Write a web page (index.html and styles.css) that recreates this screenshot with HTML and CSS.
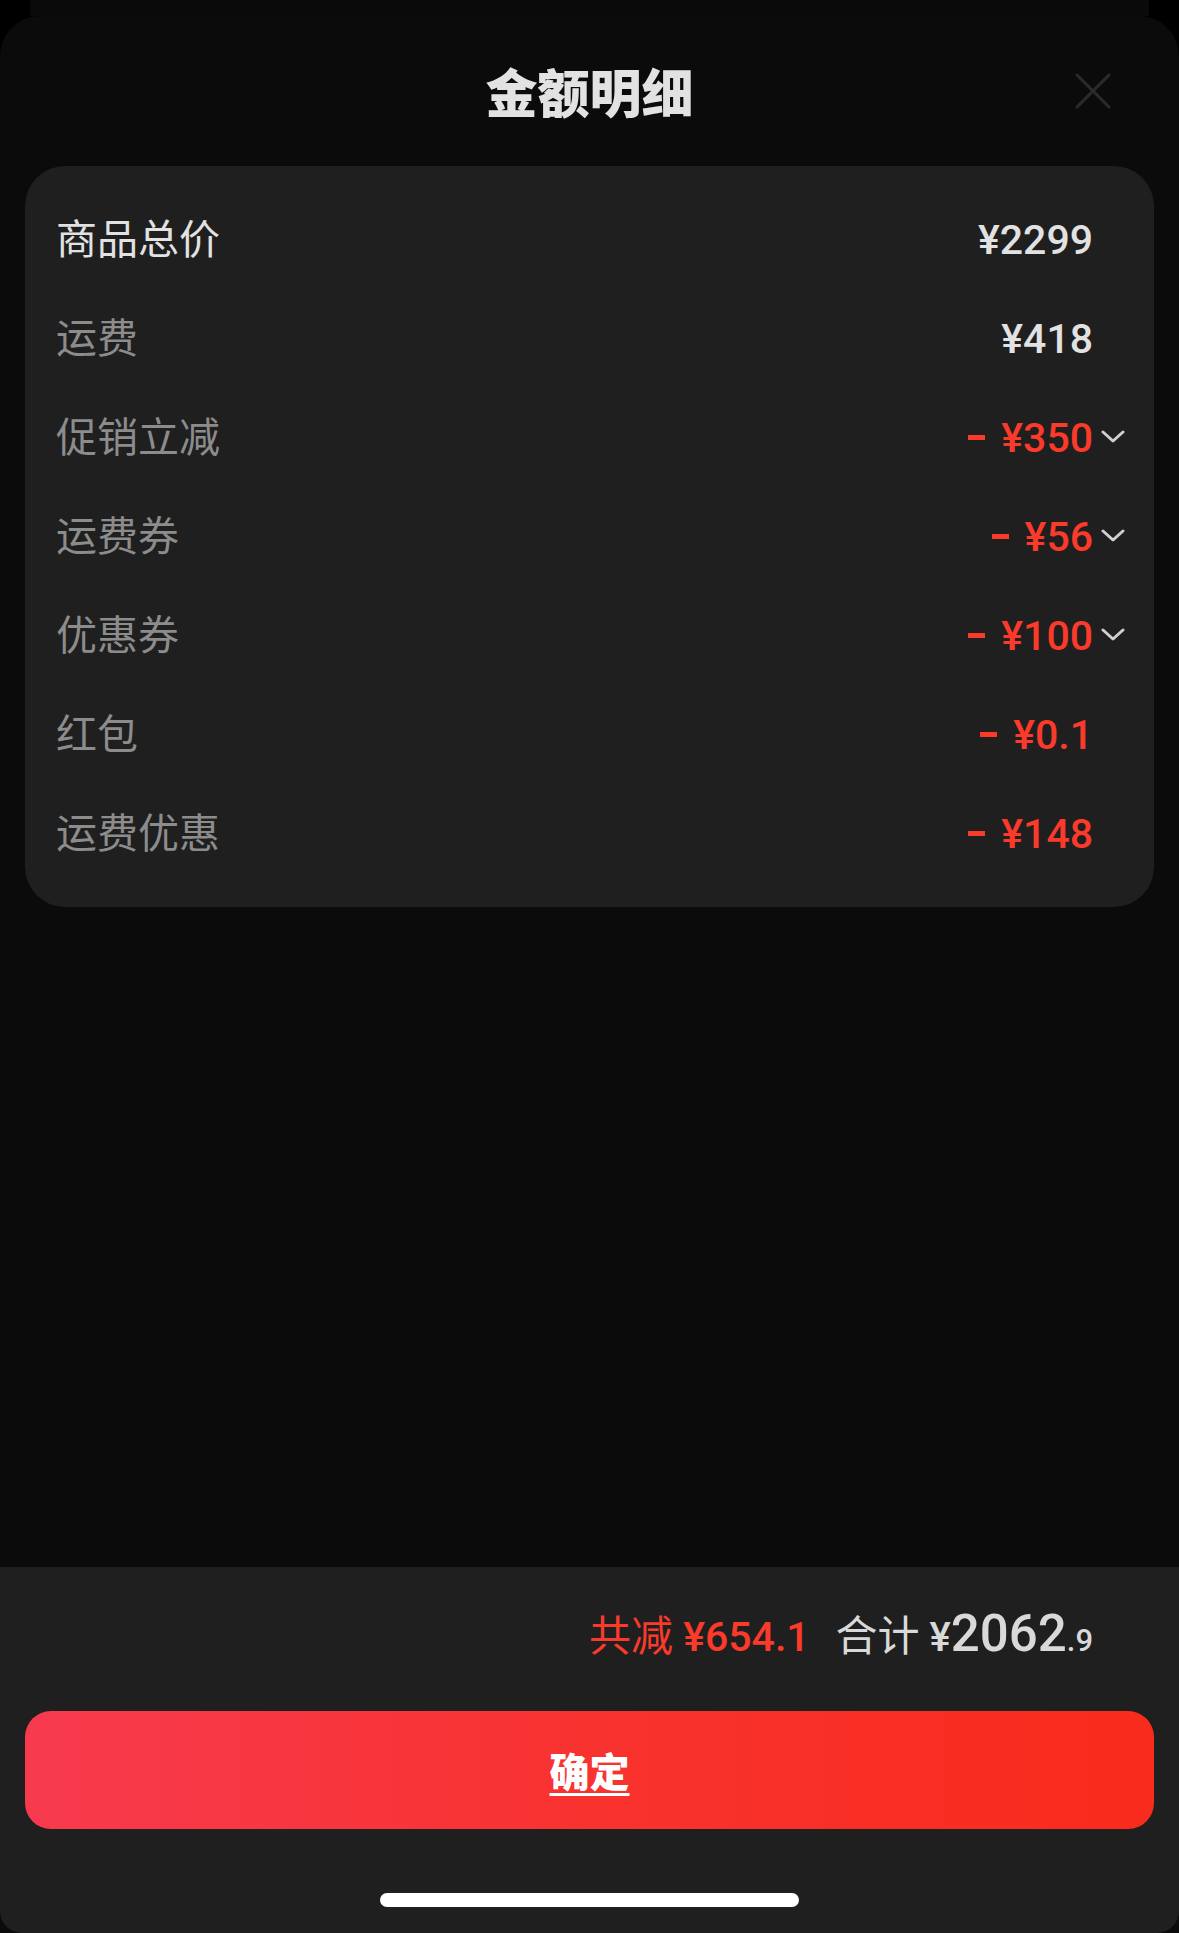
FILE: index.html
```html
<!DOCTYPE html>
<html lang="zh-CN">
<head>
  <meta charset="UTF-8">
  <title>金额明细</title>
  <meta name="viewport" content="width=device-width, initial-scale=1.0">
  <link rel="stylesheet" href="styles.css">
</head>
<body>
  <div class="behind"></div>
  <div class="sheet">
    <div class="sheet-head">
      <h1 class="title">金额明细</h1>
      <button class="close-btn" aria-label="关闭">
        <svg width="38" height="38" viewBox="0 0 38 38"><path d="M3 3L35 35M35 3L3 35" stroke="#2b2b2b" stroke-width="3" stroke-linecap="round" fill="none"/></svg>
      </button>
    </div>

    <div class="card">
      <div class="row main"><span class="label">商品总价</span><span class="val">¥2299</span><span class="slot"></span></div>
      <div class="row"><span class="label">运费</span><span class="val">¥418</span><span class="slot"></span></div>
      <div class="row"><span class="label">促销立减</span><span class="val minus"><span class="dash"></span>¥350</span><span class="slot"><svg class="chev" width="24" height="14" viewBox="0 0 24 14"><path d="M2 2L12 11L22 2" stroke="#d0d0d0" stroke-width="3" fill="none" stroke-linecap="round" stroke-linejoin="round"/></svg></span></div>
      <div class="row"><span class="label">运费券</span><span class="val minus"><span class="dash"></span>¥56</span><span class="slot"><svg class="chev" width="24" height="14" viewBox="0 0 24 14"><path d="M2 2L12 11L22 2" stroke="#d0d0d0" stroke-width="3" fill="none" stroke-linecap="round" stroke-linejoin="round"/></svg></span></div>
      <div class="row"><span class="label">优惠券</span><span class="val minus"><span class="dash"></span>¥100</span><span class="slot"><svg class="chev" width="24" height="14" viewBox="0 0 24 14"><path d="M2 2L12 11L22 2" stroke="#d0d0d0" stroke-width="3" fill="none" stroke-linecap="round" stroke-linejoin="round"/></svg></span></div>
      <div class="row"><span class="label">红包</span><span class="val minus"><span class="dash"></span>¥0.1</span><span class="slot"></span></div>
      <div class="row"><span class="label">运费优惠</span><span class="val minus"><span class="dash"></span>¥148</span><span class="slot"></span></div>
    </div>

    <div class="spacer"></div>

    <div class="footer">
      <div class="totals">
        <span class="saved"><span class="cn">共减</span> ¥654.1</span>
        <span class="sum"><span class="cn">合计</span> <span class="yen">¥</span><span class="big">2062</span><span class="small">.9</span></span>
      </div>
      <button class="ok-btn">确定</button>
      <div class="home-bar"></div>
    </div>
  </div>
</body>
</html>
```

FILE: styles.css
```css
html, body { margin:0; padding:0; }
body { width:1179px; height:1933px; background:#000; font-family: Roboto, "Noto Sans CJK SC", sans-serif; display:flex; flex-direction:column; overflow:hidden; }

.behind { height:16px; margin:0 30px; background:#0a0a0a; flex:none; }

.sheet { flex:1; display:flex; flex-direction:column; background:#0b0b0b; border-radius:40px 40px 0 0; }

/* Header */
.sheet-head { height:150px; position:relative; display:flex; align-items:center; justify-content:center; flex:none; }
.title { margin:0; font-family:"Noto Sans CJK SC", sans-serif; font-weight:900; font-size:52px; line-height:1; color:#e2e2e2; }
.close-btn { position:absolute; right:67px; top:56px; width:38px; height:38px; padding:0; border:none; background:none; }
.close-btn svg { display:block; }

/* Card */
.card { margin:0 25px; background:#1f1f1f; border-radius:40px; padding:24px 29px 24px 31px; flex:none; }
.row { height:99px; display:flex; align-items:center; }
.label { flex:1; font-family:"Noto Sans CJK SC", sans-serif; font-size:41px; color:#8c8c8c; padding-bottom:7px; }
.row.main .label { color:#e2e2e2; }
.val { font-family:Roboto, sans-serif; font-weight:500; font-size:41px; color:#e2e2e2; white-space:nowrap; }
.val.minus { color:#fa3a2a; }
.dash { display:inline-block; width:17px; height:5px; background:currentColor; vertical-align:12px; margin-right:16px; }
.slot { width:32px; flex:none; display:flex; justify-content:flex-end; align-items:center; }
.chev { display:block; margin-top:-2px; }

.spacer { flex:1; }

/* Footer */
.footer { background:#1f1f1f; padding:35px 25px 0; height:366px; box-sizing:border-box; flex:none; display:flex; flex-direction:column; border-radius:0 0 22px 22px; }
.totals { height:62px; display:flex; justify-content:flex-end; align-items:baseline; gap:26px; padding-right:61px; white-space:nowrap; }
.cn { font-family:"Noto Sans CJK SC", sans-serif; font-size:42px; font-weight:400; }
.saved { color:#fa3a2a; font-size:41px; font-weight:500; }
.sum { color:#d9d9d9; font-weight:500; font-size:40px; }
.sum .yen { font-size:40px; }
.sum .big { font-size:51px; }
.sum .small { font-size:31px; }

.ok-btn { margin-top:47px; height:118px; border:none; border-radius:26px; background:linear-gradient(90deg, #f73a4e 0%, #f8322f 50%, #f92b1c 100%); color:#fff; font-family:"Noto Sans CJK SC", sans-serif; font-weight:900; font-size:40px; text-decoration:underline; text-underline-offset:6px; text-decoration-thickness:3px; padding:0; }

.home-bar { width:419px; height:14px; border-radius:7px; background:#fff; margin:64px auto 0; }
```
